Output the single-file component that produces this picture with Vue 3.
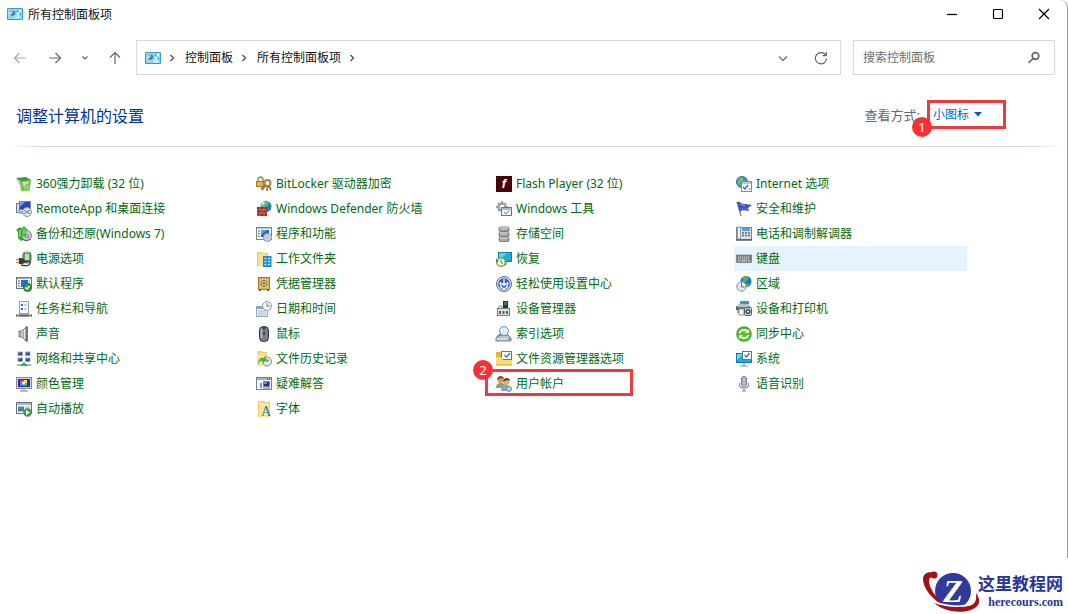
<template>
  <div class="page">
    <div class="window">
      <!-- Title bar -->
      <header class="titlebar">
        <svg class="icon" viewBox="0 0 16 16" v-html="icons.panel"></svg>
        <h1>所有控制面板项</h1>
        <div class="window-controls">
          <button type="button" aria-label="最小化">
            <svg viewBox="0 0 12 12"><path d="M1 6.500h10" /></svg>
          </button>
          <button type="button" aria-label="最大化">
            <svg viewBox="0 0 12 12"><rect x="1.500" y="1.500" width="9" height="9" rx="1" /></svg>
          </button>
          <button type="button" aria-label="关闭">
            <svg viewBox="0 0 12 12"><path d="M1 1l10 10M11 1L1 11" /></svg>
          </button>
        </div>
      </header>

      <!-- Navigation -->
      <div class="toolbar">
        <div class="nav-buttons">
          <button type="button" class="back" aria-label="后退">
            <svg viewBox="0 0 14 14"><path d="M13 7H1.500M6.500 2l-5 5 5 5" /></svg>
          </button>
          <button type="button" aria-label="前进">
            <svg viewBox="0 0 14 14"><path d="M1 7h11.500M7.500 2l5 5-5 5" /></svg>
          </button>
          <button type="button" class="recent" aria-label="最近浏览的位置">
            <svg viewBox="0 0 14 14"><path d="M4.500 5.500l2.500 2.500 2.500-2.500" /></svg>
          </button>
          <button type="button" aria-label="向上">
            <svg viewBox="0 0 14 14"><path d="M7 13V1.500M2 6.500l5-5 5 5" /></svg>
          </button>
        </div>
        <nav class="address" aria-label="地址">
          <svg class="icon" viewBox="0 0 16 16" v-html="icons.panel"></svg>
          <template v-for="crumb in crumbs" :key="crumb">
            <svg class="chevron" viewBox="0 0 24 12"><path d="M9.500 3l3 3-3 3" /></svg>
            <a href="#">{{ crumb }}</a>
          </template>
          <svg class="chevron" viewBox="0 0 24 12"><path d="M9.500 3l3 3-3 3" /></svg>
          <div class="address-buttons">
            <button type="button" aria-label="以前的位置">
              <svg viewBox="0 0 14 14"><path d="M3 5.500l4 4 4-4" /></svg>
            </button>
            <button type="button" aria-label="刷新">
              <svg viewBox="0 0 14 14"><path d="M11.800 4.300A5.600 5.600 0 1 0 12.600 7.500M12.300 1v3.700H8.600" /></svg>
            </button>
          </div>
        </nav>
        <form class="search" @submit.prevent>
          <input v-model="query" type="search" aria-label="搜索控制面板" placeholder="搜索控制面板" />
          <button type="submit" aria-label="搜索">
            <svg viewBox="0 0 14 14"><circle cx="8.500" cy="5" r="3.300" /><path d="M6 7.500L1.500 12" /></svg>
          </button>
        </form>
      </div>

      <!-- Heading and view selector -->
      <div class="heading">
        <h2>调整计算机的设置</h2>
        <label for="view">查看方式:</label>
        <div class="view">
          <select id="view" v-model="view">
            <option>类别</option>
            <option>大图标</option>
            <option>小图标</option>
          </select>
          <svg class="caret" viewBox="0 0 8 5"><path d="M0 0h8L4 4.500z" /></svg>
          <span class="mark"><b>1</b></span>
        </div>
      </div>
      <hr />

      <!-- Items -->
      <ul class="items">
        <li v-for="item in items" :key="item.name">
          <a href="#" :class="{ hovered: item.hovered }">
            <svg class="icon" viewBox="0 0 16 16" v-html="icons[item.icon]"></svg>
            <span class="name">{{ item.name }}</span>
          </a>
          <span v-if="item.mark" class="mark"><b>{{ item.mark }}</b></span>
        </li>
      </ul>
    </div>

    <footer class="brand">
      <svg class="brand-logo" viewBox="0 0 60 42">
        <circle cx="31" cy="20" r="18" fill="#303a9c" />
        <path d="M14 3C8-1 1 2 1 8c0 9 9 21 23 28-9-8-17-19-17-26 0-4 3-5 7-3z" fill="#a31019" />
        <circle cx="12" cy="4" r="3.500" fill="#a31019" />
        <path d="M12 32c9 8 26 11 37 7 8-3 11-9 5-17 1 9-2 12-8 13-9 2-24 1-34-3z" fill="#a31019" />
        <path d="M13 31c10 4 23 5 34 3" fill="none" stroke="#fff" stroke-width="1.500" />
        <text x="31" y="31" text-anchor="middle">Z</text>
      </svg>
      <div class="brand-text">
        <strong>这里教程网</strong>
        <span>herecours.com</span>
      </div>
    </footer>
  </div>
</template>

<script setup>
import { ref } from 'vue'

const query = ref('')
const view = ref('小图标')
const crumbs = ['控制面板', '所有控制面板项']

const items = [
  { name: '360强力卸载 (32 位)', icon: 'uninstall' },
  { name: 'BitLocker 驱动器加密', icon: 'bitlocker' },
  { name: 'Flash Player (32 位)', icon: 'flash' },
  { name: 'Internet 选项', icon: 'internet' },
  { name: 'RemoteApp 和桌面连接', icon: 'remote' },
  { name: 'Windows Defender 防火墙', icon: 'firewall' },
  { name: 'Windows 工具', icon: 'tools' },
  { name: '安全和维护', icon: 'flag' },
  { name: '备份和还原(Windows 7)', icon: 'backup' },
  { name: '程序和功能', icon: 'programs' },
  { name: '存储空间', icon: 'storage' },
  { name: '电话和调制解调器', icon: 'phone' },
  { name: '电源选项', icon: 'power' },
  { name: '工作文件夹', icon: 'work' },
  { name: '恢复', icon: 'recovery' },
  { name: '键盘', icon: 'keyboard', hovered: true },
  { name: '默认程序', icon: 'defaults' },
  { name: '凭据管理器', icon: 'vault' },
  { name: '轻松使用设置中心', icon: 'ease' },
  { name: '区域', icon: 'region' },
  { name: '任务栏和导航', icon: 'taskbar' },
  { name: '日期和时间', icon: 'date' },
  { name: '设备管理器', icon: 'device' },
  { name: '设备和打印机', icon: 'printer' },
  { name: '声音', icon: 'sound' },
  { name: '鼠标', icon: 'mouse' },
  { name: '索引选项', icon: 'index' },
  { name: '同步中心', icon: 'sync' },
  { name: '网络和共享中心', icon: 'network' },
  { name: '文件历史记录', icon: 'history' },
  { name: '文件资源管理器选项', icon: 'explorer' },
  { name: '系统', icon: 'system' },
  { name: '颜色管理', icon: 'color' },
  { name: '疑难解答', icon: 'trouble' },
  { name: '用户帐户', icon: 'users', mark: 2 },
  { name: '语音识别', icon: 'speech' },
  { name: '自动播放', icon: 'autoplay' },
  { name: '字体', icon: 'fonts' }
]

// Inner markup of the 16x16 icons
const icons = {
  panel: `<rect x=".5" y="2.500" width="15" height="11" rx=".5" fill="#8fdaf8" stroke="#2a9fdc"/>
    <circle cx="5.500" cy="7" r="3" fill="#e8f6ff"/><path d="M5.500 7V4a3 3 0 1 1-2.600 4.500z" fill="#3b7fc0"/><path d="M5 6.500H2.200A3 3 0 0 1 5 3.800z" fill="#f09a28"/>
    <path d="M3 11.500h4" stroke="#f3c34b" stroke-width="1.500"/><path d="M8 11.500h5" stroke="#fff" stroke-width="1.500"/>
    <path d="M10 5h4M10 8.500h4" stroke="#fff" stroke-width="2"/><path d="M10 5h1.500M12.500 8.500H14" stroke="#1769b0" stroke-width="1.500"/>`,
  uninstall: `<path d="M0 3l11-1 4 3-1 10-9 .5L3 8z" fill="#c4cdc7"/><path d="M0 2l10-1 5 3-9 2z" fill="#3b9a35"/><path d="M4 5l11-1-2 11H6z" fill="#69bd45"/>
    <path d="M6 6l8-.5-6 6z" fill="#c9ecac"/><path d="M9 8l5 2-1 5H8z" fill="#8fce6a"/>`,
  bitlocker: `<path d="M2 6V3.500A2.500 2.500 0 0 1 7 3.500V6" fill="none" stroke="#9a8a60" stroke-width="1.500"/><rect x=".5" y="5.500" width="7" height="5" fill="#e5b53c" stroke="#a97913"/>
    <circle cx="11.500" cy="7" r="3" fill="none" stroke="#a78547" stroke-width="2"/><path d="M10 9l-4 5M11.500 10l-.5 5M13 10l2 4" stroke="#8f7443" stroke-width="1.800"/><path d="M8 10l-3 3" stroke="#767f89" stroke-width="1.500"/>`,
  flash: `<rect width="16" height="16" fill="#430509"/><text x="8" y="12" text-anchor="middle" font-family="Liberation Sans, sans-serif" font-size="13" font-weight="bold" font-style="italic" fill="#fff">f</text>`,
  internet: `<circle cx="6" cy="6" r="5.500" fill="#3c91ce" stroke="#3a6a98"/><path d="M3 2.500c3-2 5 0 4 2S3 6 4 8 2 9 1.500 7z" fill="#77c55a"/>
    <rect x="5.500" y="5.500" width="10" height="10" fill="#f8fbff" stroke="#7c91a6"/><path d="M6 7h9" stroke="#9db8d2" stroke-width="1.500"/><path d="M7 11l2 2 3-4" fill="none" stroke="#2f71c7" stroke-width="1.400"/><path d="M12.500 13h2" stroke="#777"/>`,
  remote: `<rect x="3.500" y=".5" width="11" height="8" fill="#2148b8" stroke="#7b8794"/><path d="M4 1h5L4 6z" fill="#7298ef"/><rect x=".5" y="2.500" width="3" height="9" fill="#d5dde5" stroke="#6b7885"/><path d="M3 10h7v3H3z" fill="#a9b3bd"/>
    <circle cx="11" cy="11" r="4.500" fill="#dfe6ec" stroke="#8794a0"/><path d="M8.500 9l2 2-2 2M13.500 9l-2 2 2 2" fill="none" stroke="#4a5764"/>`,
  firewall: `<circle cx="10" cy="5.500" r="5.500" fill="#237cc5"/><path d="M8 0c4-1 6 2 4 4s-3 1-2 4l-3 1-2-4z" fill="#62bd55"/><path d="M5 2c2-2 4-1 4 0L6 5z" fill="#bde4fb"/>
    <path d="M1 6h9l1 1v8H2l-1-1z" fill="#a12b20"/><path d="M1 9h10M1 12h10M4 6v3M8 6v3M6 9v3M4 12v3M8 12v3" stroke="#dc9f8d" stroke-width=".6"/>`,
  tools: `<circle cx="6" cy="6" r="3.500" fill="none" stroke="#9aa1a8" stroke-width="2.500"/><path d="M6 0v3M6 9v3M0 6h3M9 6h3M2 2l2 2M10 2L8 4M2 10l2-2" stroke="#9aa1a8" stroke-width="1.800"/>
    <rect x="5.500" y="6.500" width="10" height="8" fill="#fff" stroke="#60778f"/><path d="M5.500 8h10" stroke="#8ba2ba" stroke-width="1.500"/><path d="M8 11l2 2 3-3.500" fill="none" stroke="#2b7bd3"/>`,
  flag: `<path d="M1 1l4 14" stroke="#7d86a3" stroke-width="1.300"/><path d="M1 1c4-1 5 3 8 2l7 1-4 3 1 3c-4 0-6-2-9 1z" fill="#3b4fba"/><path d="M3 3c3-1 3 2 6 2" stroke="#93a5f1" fill="none"/><path d="M5 8c3-2 4 0 7 0" stroke="#6278d8" fill="none"/>`,
  backup: `<circle cx="10.500" cy="9.500" r="5" fill="#c3c9cd" stroke="#798187"/><path d="M0 4l4-3 3 3-1 1 1 9-2 1-3-3 0-6z" fill="#36a62f"/><path d="M5 3l3-3 4 4-2 1v6L7 10z" fill="#45b53b"/><path d="M4 4v7M8 3v5" stroke="#98e17c" stroke-width="1.300"/>
    <circle cx="11" cy="10" r="1.500" fill="#f1f3f5" stroke="#636b73"/><path d="M6 13l4 2 5-2" fill="none" stroke="#5c636a"/>`,
  programs: `<rect x=".5" y="1.500" width="15" height="12" fill="#fafbfc" stroke="#78828c"/><path d="M1 2.500h14" stroke="#bac5cf"/><path d="M2 5h2M2 7.500h2M2 10h2" stroke="#51606d"/><path d="M5 4h8v7H5z" fill="#206bb9"/><path d="M5 4h6l-6 5z" fill="#57a3e5"/>
    <circle cx="11.500" cy="11.500" r="4" fill="#cfdae4" stroke="#8799aa"/><circle cx="11.500" cy="11.500" r="1.200" fill="#fff" stroke="#78899a" stroke-width=".6"/>`,
  storage: `<g fill="#a8aaac" stroke="#626568" stroke-width=".8"><rect x="3" y="11" width="10" height="4.500" rx="1.500"/><rect x="3" y="6" width="10" height="4.500" rx="1.500"/><rect x="3" y="1" width="10" height="4.500" rx="1.500"/></g><path d="M4 2h8M4 7h8M4 12h8" stroke="#e3e5e7"/><path d="M11 4h1M11 9h1M11 14h1" stroke="#3eac45"/>`,
  phone: `<rect x=".5" y="1.500" width="15" height="12" fill="#dde2e6" stroke="#7b858e"/><rect x="1.500" y="1" width="3" height="12" fill="#f8f8f8" stroke="#8d959c"/><path d="M6 2h8v3H6z" fill="#4ba6da"/><path d="M6 7h2M9 7h2M12 7h2M6 9.500h2M9 9.500h2M12 9.500h2" stroke="#5a6670" stroke-width="1.300"/><path d="M0 14h16" stroke="#555f69" stroke-width="1.500"/>`,
  power: `<rect x="7" y="1" width="8" height="11" rx="3" fill="#55a858" stroke="#5d6b64"/><path d="M9 3h4v6H9z" fill="#b9e2b0"/><path d="M9 1h4" stroke="#ccd3ce" stroke-width="1.500"/>
    <path d="M0 8.500h3M0 11.500h3" stroke="#c19b3f" stroke-width="1.300"/><path d="M3 7h3l3 2v3l-3 1H3z" fill="#3a3a3a"/><path d="M9 11c3-2 6-1 5 2-1 2-5 2-9 1" fill="none" stroke="#444" stroke-width="1.500"/>`,
  work: `<path d="M1 1h5l1 1h5v13H1z" fill="#efc955"/><path d="M2 2l9 1v12H2z" fill="#fae18a"/><rect x="7" y="5" width="8.500" height="11" fill="#168bd1"/><path d="M8.500 7.500h2M12 7.500h2M8.500 10.500h2M12 10.500h2M8.500 13.500h2M12 13.500h2" stroke="#d1f0ff" stroke-width="1.500"/>`,
  recovery: `<path d="M2 1h14v10H2z" fill="#087fae"/><path d="M3 2h12v8H3z" fill="#20abd0"/><path d="M3 2h8l-7 7H3z" fill="#63d1e4"/><path d="M10 11v3H7" fill="none" stroke="#6f7e8a"/>
    <circle cx="5" cy="11" r="4.300" fill="#f5fff0" stroke="#67ad3e" stroke-width="1.400"/><path d="M5 8.500V11l2 1.500" fill="none" stroke="#4b5c67"/><path d="M0 7v4h3z" fill="#4c9d29"/>`,
  keyboard: `<rect x=".5" y="3.500" width="15" height="8" rx=".5" fill="#74777c" stroke="#85888c"/><path d="M1 3.500h14" stroke="#c4c8cc"/><path d="M2 6h12M2 8h12" stroke="#e6e8eb" stroke-dasharray="1.300 .7"/><path d="M2 10h2M5 10h6M12 10h2" stroke="#e6e8eb"/>`,
  defaults: `<rect x=".5" y="1.500" width="15" height="11" fill="#fff" stroke="#647483"/><path d="M1 2.500h14" stroke="#9dadba" stroke-width="1.300"/><path d="M2 5h2M2 7.500h2M2 10h2M13 5h1M13 7.500h1" stroke="#4f5d69"/><path d="M5 4h7v7H5z" fill="#1675ce"/><circle cx="11.500" cy="11.500" r="4" fill="#3da044" stroke="#26752f"/><path d="M9.500 11.500l1.500 1.500 2.500-3" fill="none" stroke="#fff" stroke-width="1.300"/>`,
  vault: `<rect x="2.500" y="1.500" width="11" height="12" fill="#d6b251" stroke="#9c7a2a"/><rect x="4" y="3" width="8" height="9" fill="#e3c77a"/><circle cx="8" cy="7.500" r="3" fill="#efe2af" stroke="#80652b"/><circle cx="8" cy="7.500" r="1" fill="#a39474" stroke="#6c634f"/><path d="M3 14.500h2M11 14.500h2" stroke="#6a501b"/>`,
  ease: `<circle cx="8" cy="8" r="7.500" fill="#d8def2" stroke="#5967a5"/><circle cx="8" cy="8" r="5.800" fill="#3157bd"/><path d="M4 6l1 5 3 2 3-2 1-5M8 3v6M5.500 7L8 9.500 10.500 7" fill="none" stroke="#fff" stroke-width="1.400"/>`,
  region: `<circle cx="10" cy="5.500" r="5.500" fill="#1878c5"/><path d="M7 1c3-2 6 0 5 2s-4 2-3 4 4 0 5 1l-3 3-4-3z" fill="#54b94c"/><circle cx="5.500" cy="10.500" r="4.700" fill="#e6ecf1" stroke="#8491a0"/><path d="M5.500 7v4h3" fill="none" stroke="#536c84"/><path d="M5.500 7v-.6M9 10.500h.7M5.500 14v.5M2 10.500h-.5" stroke="#758796"/>`,
  taskbar: `<rect x="3.500" y=".5" width="9" height="12" fill="#f5f9fc" stroke="#8ca0b2"/><path d="M5 4h2M5 8h2" stroke="#2870b8" stroke-width="2"/><path d="M8 4h3M8 8h3" stroke="#a1b1bf"/><path d="M0 14.500h16" stroke="#4a5057" stroke-width="2"/><path d="M1 14.500h2M13 14.500h2" stroke="#a2adb7"/>`,
  date: `<rect x=".5" y="5.500" width="11" height="10" fill="#eaf3fa" stroke="#91aabd"/><path d="M1 7h10" stroke="#82a7c2" stroke-width="2"/><path d="M2.500 10h8M2.500 12h8M2.500 14h8" stroke="#738999" stroke-dasharray="1 1"/><circle cx="11" cy="5" r="4.500" fill="#f7fafc" stroke="#889aab"/><path d="M11 2v3h3" fill="none" stroke="#587690"/>`,
  device: `<path d="M7 0h5v8H7z" fill="#333"/><path d="M8 1h3v3H8z" fill="#39864b"/><rect x="1.500" y="7.500" width="12" height="7" fill="#dfe1e3" stroke="#777b80"/><path d="M3 10h2v3H3zM6.500 10h2v3h-2zM10 10h2v3h-2z" fill="#5a6168"/><path d="M3 7V5h3v2" fill="none" stroke="#8b9197"/>`,
  printer: `<path d="M4 0h9v4H4z" fill="#2ca0c4"/><path d="M0 5h14v4H0z" fill="#6c747b"/><path d="M2 3h11v3H2z" fill="#b7c2c9"/><path d="M3 8h5v6H3z" fill="#fff" stroke="#819099"/><rect x="8.500" y="6.500" width="7" height="8" rx="1" fill="#c5cbd0" stroke="#555e66"/><circle cx="12" cy="10.500" r="2.500" fill="#424c56"/><circle cx="12" cy="10.500" r="1" fill="#fff"/><path d="M0 8h2v4" stroke="#555" fill="none"/>`,
  sound: `<path d="M3 5h3l5-5v16l-5-5H3z" fill="#a9abae" stroke="#686c70" stroke-width=".8"/><path d="M6 5v6M8.500 3v10" stroke="#e5e7e9"/><path d="M11 1v14" stroke="#606469" stroke-width="1.500"/>`,
  mouse: `<rect x="3.500" y=".5" width="9" height="15" rx="4" fill="#78808a" stroke="#292e34"/><path d="M5.500 3v9" stroke="#b7bec7" stroke-width="1.500"/><path d="M8 1v8" stroke="#202328" stroke-width="1.300"/><path d="M8 4v2" stroke="#82b3df" stroke-width="1.200"/>`,
  index: `<path d="M3 9h9l3 3v3H0v-3z" fill="#bcc5ce" stroke="#75818d"/><path d="M1 13h13" stroke="#edf0f3"/><circle cx="8" cy="5" r="4.500" fill="#dcefff" stroke="#758ca2"/><path d="M5 8l-4 3" stroke="#748493" stroke-width="1.800"/><path d="M12 13h2" stroke="#36b549" stroke-width="1.500"/>`,
  sync: `<circle cx="8" cy="8" r="7.800" fill="#43ac31"/><circle cx="8" cy="8" r="6.500" fill="#56be3d"/><path d="M3.500 7c1-3 5-4 7.500-2M12.500 9c-1 3-5 4-7.500 2" fill="none" stroke="#fff9bd" stroke-width="2"/><path d="M9 7h4V3zM7 9H3v4z" fill="#fff9bd"/>`,
  network: `<g fill="#263f9b" stroke="#9ba6b3" stroke-width=".8"><rect x="2" y="1" width="4.500" height="3.500"/><rect x="9.500" y="1" width="4.500" height="3.500"/><rect x="2" y="7" width="4.500" height="3.500"/><rect x="9.500" y="7" width="4.500" height="3.500"/></g><path d="M3 2h1.500M10.500 2H12M3 8h1.500M10.500 8H12" stroke="#829ceb"/><path d="M1 14h14" stroke="#8ccfb0" stroke-width="2"/><path d="M8 11l4 4H4z" fill="#38a873"/>`,
  history: `<path d="M1 0h5l1 1h4v14H1z" fill="#f4d469"/><path d="M1 3l8-1v13H1z" fill="#f9e394"/><circle cx="11" cy="10.500" r="4.500" fill="#e5ebee" stroke="#7d8b92"/><path d="M11 8v3l2-2" fill="none" stroke="#66727d"/><path d="M2 14c0-6 3-8 6-7V5l3 4-4 3v-2c-2-1-4 0-5 4z" fill="#4eaf2d"/>`,
  explorer: `<path d="M0 1h6l1 2h8v11H0z" fill="#e9b432"/><rect x="5.500" y=".5" width="10" height="8" fill="#fff" stroke="#557da4"/><path d="M8.500 4l2 2L14 2" fill="none" stroke="#257ad2" stroke-width="1.300"/><path d="M0 6h5l2 3h9v5H0z" fill="#fada72"/><path d="M0 14h16" stroke="#dda722"/>`,
  system: `<path d="M0 2h16v10H0z" fill="#087cac"/><path d="M1 3h14v8H1z" fill="#2aa8d2"/><path d="M1 3h6l-6 6z" fill="#77d9ec"/><path d="M8 12v3M4 15h8" stroke="#7193a6" stroke-width="1.200"/><rect x="6.500" y=".5" width="9" height="8" fill="#fff" stroke="#57789b"/><path d="M8.500 4l2 2 3-4" fill="none" stroke="#2b77cd" stroke-width="1.300"/>`,
  color: `<rect x=".5" y="1.500" width="15" height="11" fill="#d8dade" stroke="#858a91"/><path d="M2 3h12v8H2z" fill="#1c2fae"/><path d="M4 4h4v3H4z" fill="#de358d"/><path d="M8 4h3v3H8z" fill="#f4e03b"/><path d="M4 7h4v3H4z" fill="#2697ee"/><path d="M8 7h3v3H8z" fill="#36bd5a"/><circle cx="7.500" cy="7" r="1.500" fill="#fff"/><path d="M8 12v3M4 15h8" stroke="#a2a4a8" stroke-width="1.500"/>`,
  trouble: `<rect x=".5" y="1.500" width="15" height="12" fill="#f5f5f5" stroke="#7b8287"/><path d="M1 3h14" stroke="#a8b0b8" stroke-width="2"/><path d="M11 3h1M13 3h1" stroke="#333"/><path d="M7.500 5.500h6v5h-6z" fill="#1b2da8" stroke="#777" stroke-width=".7"/><path d="M8 6h3v2H8z" fill="#6383ed"/><path d="M4 7h2v5H4z" fill="#8396a7"/><path d="M7 12h7" stroke="#68757e"/>`,
  users: `<path d="M0 12c0-4 2-5 5-5s5 1 5 5z" fill="#91a566"/><circle cx="4.500" cy="4" r="3" fill="#d49a69"/><path d="M1 4c0-5 7-5 7-1L5 2z" fill="#775028"/><path d="M5 15c0-5 2-6 5-6s5 2 5 6z" fill="#86a5c5"/><circle cx="10.500" cy="6" r="3" fill="#e2ae7b"/><path d="M7 6c0-5 7-5 7-1l-3-1z" fill="#603b24"/><circle cx="13" cy="13" r="2.500" fill="#b9d3e9" stroke="#6b8cac"/>`,
  speech: `<rect x="5.500" y=".5" width="5" height="10" rx="2.500" fill="#d8dcea" stroke="#69748c"/><path d="M5 3h6M5 5.500h6M5 8h6" stroke="#7b86a0"/><path d="M3.500 7v2c0 2 2 3 4.500 3s4.500-1 4.500-3V7M8 12v3M6 15h4" fill="none" stroke="#8290ac" stroke-width="1.200"/>`,
  autoplay: `<rect x=".5" y="1.500" width="15" height="11" fill="#f9fafb" stroke="#697681"/><path d="M1 3h14" stroke="#abb8c3" stroke-width="2"/><path d="M2 5.500h6v5H2z" fill="#4d86a2"/><path d="M9 6h5M9 8h5" stroke="#a5acb1"/><circle cx="11.500" cy="11.500" r="4.200" fill="#39a03e"/><path d="M10 9l4 2.500-4 2.500z" fill="#fff"/>`,
  fonts: `<path d="M2 0h6l1 1h5v15H2z" fill="#f4cc62"/><path d="M3 1l10 1v14H3z" fill="#fbe6a1"/><text x="5" y="15" font-family="Liberation Serif, serif" font-size="14" fill="#197b9b">A</text>`
}
</script>

<style>
body {
  margin: 0;
  background: #fff;
}
</style>

<style scoped>
.page {
  min-height: 100vh;
  font-family: "Noto Sans", "Noto Sans CJK SC", sans-serif;
  font-size: 12px;
  color: #111;
}

.window {
  box-sizing: border-box;
  min-height: calc(100vh - 56px);
  border-right: 1px solid #999;
  border-radius: 8px 8px 0 0;
}

button {
  display: flex;
  align-items: center;
  justify-content: center;
  padding: 0;
  border: none;
  background: none;
}

button svg {
  width: 14px;
  height: 14px;
  fill: none;
  stroke: #666;
  stroke-width: 1.2;
}

a {
  color: inherit;
  text-decoration: none;
}

.icon {
  width: 16px;
  height: 16px;
  flex: none;
  overflow: visible;
}

/* Title bar */
.titlebar {
  display: flex;
  align-items: center;
  height: 28px;
  padding-left: 7px;
  gap: 5px;
}

.titlebar h1 {
  margin: 0;
  font-size: 12px;
  font-weight: 400;
}

.window-controls {
  display: flex;
  align-self: stretch;
  margin-left: auto;
}

.window-controls button {
  width: 46px;
}

.window-controls svg {
  width: 12px;
  height: 12px;
  stroke: #000;
}

/* Navigation */
.toolbar {
  display: flex;
  height: 35px;
  margin-top: 12px;
  padding: 0 12px 0 2px;
}

.nav-buttons {
  display: flex;
  margin-right: 4px;
}

.nav-buttons button {
  width: 35px;
}

.nav-buttons .recent {
  width: 25px;
}

.back svg {
  stroke: #aaa;
}

.address,
.search {
  display: flex;
  align-items: center;
  box-sizing: border-box;
  border: 1px solid #d9d9d9;
}

.address {
  flex: 1;
  padding-left: 8px;
}

.address a {
  padding-bottom: 2px;
}

.chevron {
  width: 24px;
  height: 12px;
  fill: none;
  stroke: #555;
  stroke-width: 1.4;
}

.address-buttons {
  display: flex;
  align-self: stretch;
  margin-left: auto;
}

.address-buttons button {
  width: 38px;
}

.search {
  width: 202px;
  margin-left: 12px;
}

.search input {
  flex: 1;
  min-width: 0;
  padding: 0 0 0 9px;
  border: none;
  outline: none;
  background: none;
  font: inherit;
}

.search input::placeholder {
  color: #6d6d6d;
}

.search button {
  width: 40px;
}

.search button svg {
  stroke-width: 1.7;
}

/* Heading */
.heading {
  display: flex;
  align-items: center;
  height: 29px;
  padding: 25px 61px 17px 16px;
}

.heading h2 {
  margin: 0 auto 0 0;
  font-size: 16px;
  font-weight: 400;
  color: #003399;
}

.heading label {
  margin-right: 7px;
  font-size: 13px;
  color: #5a6c7d;
}

.view {
  position: relative;
  display: flex;
  align-items: center;
  width: 79px;
  height: 29px;
}

.view select {
  appearance: none;
  width: 100%;
  height: 100%;
  padding: 0 0 0 6px;
  border: none;
  background: none;
  font: inherit;
  color: #0066cc;
}

.caret {
  position: absolute;
  left: 47px;
  width: 8px;
  height: 5px;
  fill: #0a5ab5;
  pointer-events: none;
}

hr {
  height: 1px;
  margin: 0;
  border: none;
  background: linear-gradient(90deg, #fff 8px, #cddbe6 40px, #cddbe6 calc(100% - 40px), #fff);
}

/* Items */
.items {
  display: grid;
  grid-template-columns: repeat(auto-fill, 233px);
  column-gap: 7px;
  margin: 24px 0 0;
  padding: 0 0 0 14px;
  list-style: none;
}

.items li {
  position: relative;
}

.items a {
  display: flex;
  align-items: center;
  gap: 4px;
  height: 25px;
  padding-left: 2px;
  color: #006b12;
  white-space: nowrap;
}

.items a.hovered,
.items a:hover {
  background: #e5f3ff;
}

.name {
  padding-bottom: 2px;
}

/* Numbered step frames */
.mark {
  position: absolute;
  inset: 0;
  border: 3px solid #ea3b3f;
  pointer-events: none;
}

.items .mark {
  inset: -2px 94px 0 -9px;
}

.mark b {
  position: absolute;
  width: 20px;
  height: 20px;
  border-radius: 50%;
  background: #fa3034;
  color: #fff;
  font-size: 13px;
  font-weight: 400;
  line-height: 20px;
  text-align: center;
}

.view .mark b {
  left: -18px;
  bottom: -11px;
}

.items .mark b {
  left: -15px;
  top: -12px;
}

/* Site brand */
.brand {
  display: flex;
  justify-content: flex-end;
  align-items: center;
  box-sizing: border-box;
  height: 56px;
  padding: 12px 5px 0 0;
}

.brand-logo {
  width: 60px;
  height: 42px;
}

.brand-logo text {
  font-family: "Liberation Serif", serif;
  font-size: 32px;
  font-weight: 700;
  font-style: italic;
  fill: #fff;
}

.brand-text {
  display: flex;
  flex-direction: column;
  align-items: flex-end;
  margin-left: -4px;
  color: #27369a;
}

.brand-text strong {
  font-size: 17px;
  line-height: 20px;
}

.brand-text span {
  font-family: "Liberation Serif", serif;
  font-size: 12px;
  font-weight: 700;
  line-height: 16px;
}
</style>
